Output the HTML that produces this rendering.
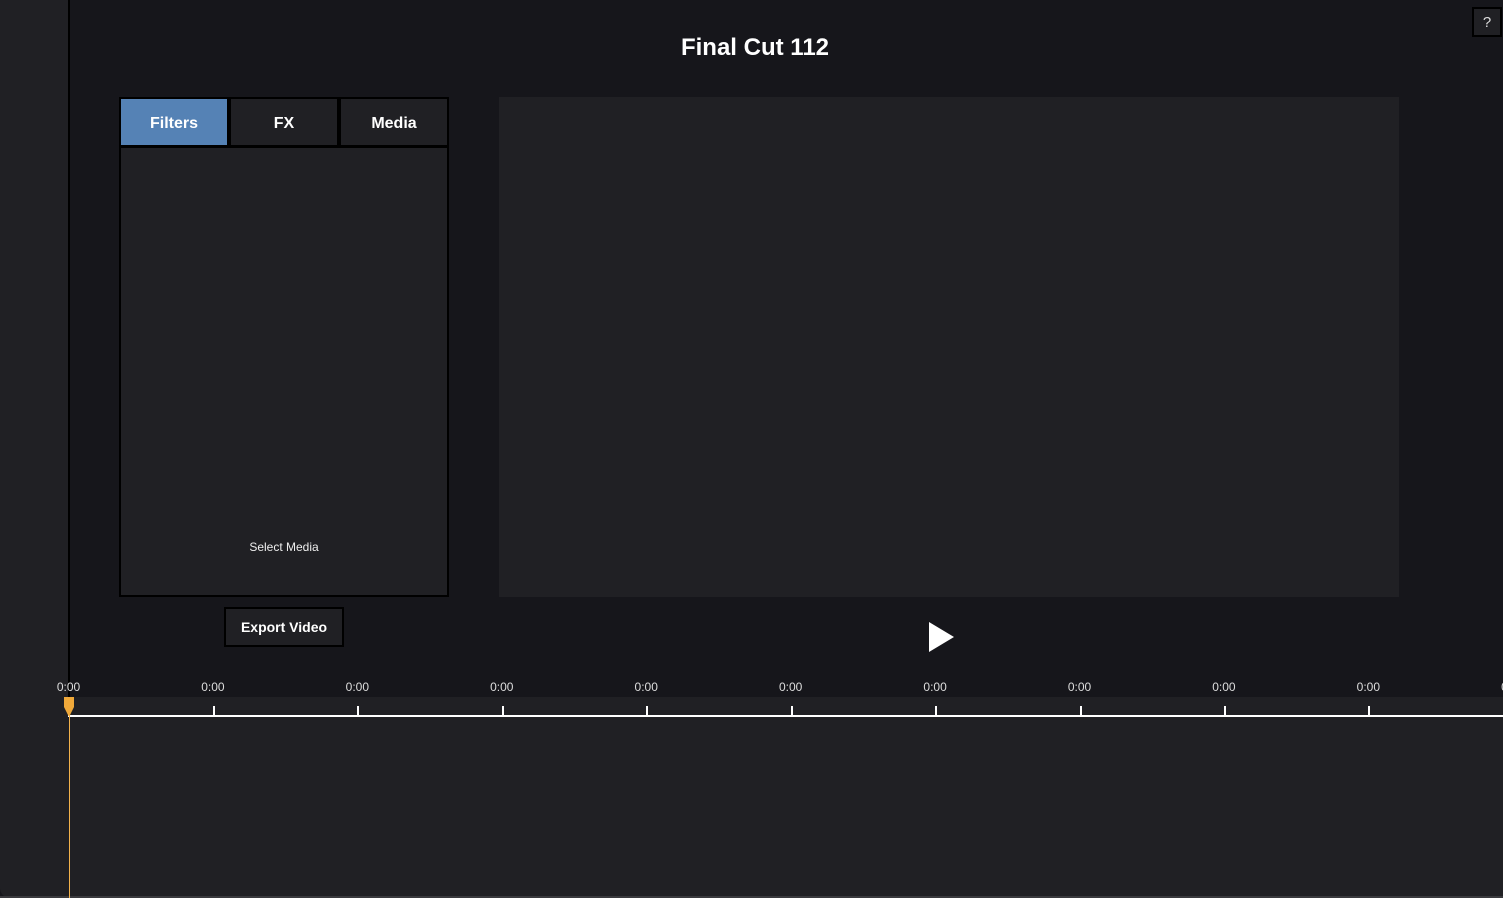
<!DOCTYPE html>
<html><head><meta charset="utf-8"><style>
*{margin:0;padding:0;box-sizing:border-box}
html,body{width:1503px;height:898px;overflow:hidden;background:#16161b;font-family:"Liberation Sans",Arial,sans-serif;color:#fff}
.abs{position:absolute}
</style></head><body>
<div class="abs" style="left:0;top:0;width:68px;height:898px;background:#202024;border-bottom-left-radius:10px"></div>
<div class="abs" style="left:68px;top:0;width:2px;height:697px;background:#000"></div>
<div class="abs" style="left:555px;top:34px;width:400px;text-align:center;font-size:24px;font-weight:bold;">Final Cut 112</div>
<div class="abs" style="left:1472px;top:7px;width:30px;height:30px;border:2px solid #000;background:#202024;font-size:15px;text-align:center;line-height:28px;color:#ddd">?</div>
<div class="abs" style="left:119px;top:97px;width:330px;height:500px;background:#000"></div>
<div class="abs" style="left:121px;top:99px;width:106px;height:46px;background:#5582b5;font-size:16px;font-weight:bold;text-align:center;line-height:50px">Filters</div>
<div class="abs" style="left:231px;top:99px;width:106px;height:46px;background:#202024;font-size:16px;font-weight:bold;text-align:center;line-height:50px">FX</div>
<div class="abs" style="left:341px;top:99px;width:106px;height:46px;background:#202024;font-size:16px;font-weight:bold;text-align:center;line-height:50px">Media</div>
<div class="abs" style="left:121px;top:148px;width:326px;height:447px;background:#202024"></div>
<div class="abs" style="left:121px;top:540px;width:326px;text-align:center;font-size:12px;color:#eee">Select Media</div>
<div class="abs" style="left:224px;top:607px;width:120px;height:40px;border:2px solid #000;background:#202024;font-size:14px;font-weight:bold;text-align:center;line-height:36px">Export Video</div>
<div class="abs" style="left:499px;top:97px;width:900px;height:500px;background:#202024"></div>
<svg class="abs" style="left:929px;top:622px" width="26" height="30"><polygon points="0,0 25,15 0,30" fill="#fff"/></svg>
<div class="abs" style="left:68px;top:697px;width:1435px;height:201px;background:#202024"></div>
<div class="abs" style="left:68px;top:715px;width:1435px;height:2px;background:#fff"></div>
<div class="abs" style="left:0;top:896px;width:1503px;height:2px;background:#3a3a3e"></div>
<div id="tl"></div>
<div class="abs" style="left:69px;top:712px;width:1px;height:186px;background:#f3b24c"></div>
<svg class="abs" style="left:64px;top:697px" width="12" height="20"><polygon points="0,0 10,0 10,10 5.5,19 4.5,19 0,10" fill="#f0a93a"/></svg>
<script>
var h='';for(var i=0;i<11;i++){var x=68.5+i*144.43;
h+='<div class="abs" style="left:'+(x-30)+'px;top:680px;width:60px;text-align:center;font-size:12px;color:#ddd">0:00</div>';
if(i>0)h+='<div class="abs" style="left:'+(Math.round(x))+'px;top:706px;width:2px;height:10px;background:#fff"></div>';}
document.getElementById('tl').innerHTML=h;
</script>
</body></html>
